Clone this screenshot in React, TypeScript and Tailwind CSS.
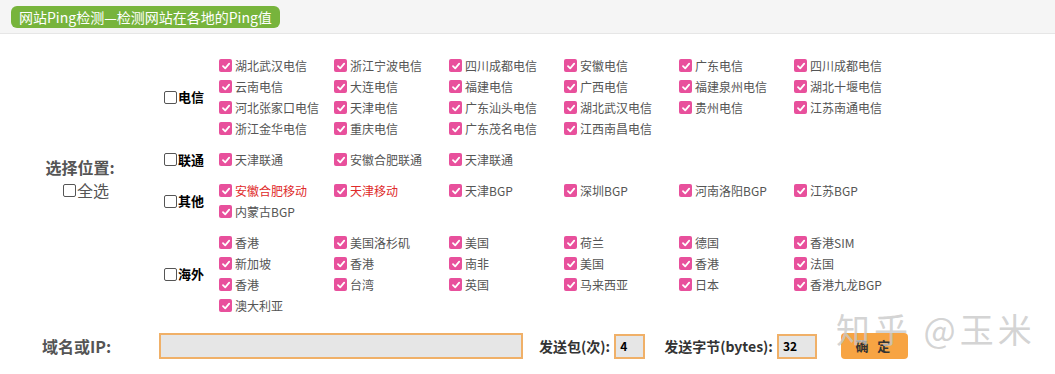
import React from "react";

type Item = { name: string; red?: boolean };

const groups: { label: string; items: Item[] }[] = [
  {
    label: "电信",
    items: [
      "湖北武汉电信", "浙江宁波电信", "四川成都电信", "安徽电信", "广东电信", "四川成都电信",
      "云南电信", "大连电信", "福建电信", "广西电信", "福建泉州电信", "湖北十堰电信",
      "河北张家口电信", "天津电信", "广东汕头电信", "湖北武汉电信", "贵州电信", "江苏南通电信",
      "浙江金华电信", "重庆电信", "广东茂名电信", "江西南昌电信",
    ].map((name) => ({ name })),
  },
  {
    label: "联通",
    items: ["天津联通", "安徽合肥联通", "天津联通"].map((name) => ({ name })),
  },
  {
    label: "其他",
    items: [
      { name: "安徽合肥移动", red: true },
      { name: "天津移动", red: true },
      { name: "天津BGP" },
      { name: "深圳BGP" },
      { name: "河南洛阳BGP" },
      { name: "江苏BGP" },
      { name: "内蒙古BGP" },
    ],
  },
  {
    label: "海外",
    items: [
      "香港", "美国洛杉矶", "美国", "荷兰", "德国", "香港SIM",
      "新加坡", "香港", "南非", "美国", "香港", "法国",
      "香港", "台湾", "英国", "马来西亚", "日本", "香港九龙BGP",
      "澳大利亚",
    ].map((name) => ({ name })),
  },
];

const PinkBox = () => (
  <span className="w-[13px] h-[13px] rounded-[2px] bg-[#e8509c] flex items-center justify-center shrink-0">
    <svg width="10" height="10" viewBox="0 0 10 10">
      <path d="M2 5.2 L4.2 7.3 L8.2 2.6" stroke="white" strokeWidth="1.8" fill="none" strokeLinecap="round" strokeLinejoin="round" />
    </svg>
  </span>
);

const EmptyBox = () => (
  <span className="w-[13px] h-[13px] rounded-[2px] border border-[#555] bg-white shrink-0" />
);

export default function App() {
  return (
    <div
      className="relative w-[1055px] h-[374px] bg-white text-[#555] overflow-hidden"
      style={{ fontFamily: '"Noto Sans CJK SC", "Noto Sans", sans-serif' }}
    >
      <div className="h-[34px] bg-[#f5f5f5] border-b border-[#e6e6e6] flex items-center pl-[11px]">
        <div className="h-[22px] px-[8px] rounded-[6px] bg-[#77b43c] text-white text-[14px] leading-[22px]">
          网站Ping检测—检测网站在各地的Ping值
        </div>
      </div>

      <div className="flex mt-[16px]">
        <div className="w-[160px] flex flex-col items-center justify-center pb-[14px]">
          <div className="text-[16px] font-bold leading-[22px]">选择位置:</div>
          <div className="flex items-center gap-[1px] text-[16px] leading-[22px] ml-[12px] mt-[1px]">
            <EmptyBox />
            <span>全选</span>
          </div>
        </div>
        <div className="flex flex-col">
          {groups.map((g) => (
            <div key={g.label} className="flex py-[5px]">
              <div className="w-[59px] flex items-center gap-[1px] pl-[4px] text-[13px] font-bold text-black">
                <EmptyBox />
                <span>{g.label}</span>
              </div>
              <div className="grid grid-cols-[repeat(6,115px)]">
                {g.items.map((it, i) => (
                  <div key={i} className="h-[21px] flex items-center gap-[3px] text-[12px]">
                    <PinkBox />
                    <span className={it.red ? "text-[#e02a2a]" : "text-[#555]"}>{it.name}</span>
                  </div>
                ))}
              </div>
            </div>
          ))}
        </div>
      </div>

      <div className="flex items-center mt-[12px] h-[26px]">
        <div className="w-[159px] pl-[42px] text-[16px] font-bold">域名或IP:</div>
        <div className="w-[364px] h-[26px] border-2 border-[#f0b068] bg-[#e6e6e6]" />
        <span className="ml-[16px] text-[14px] font-bold text-[#333]">发送包(次):</span>
        <div className="ml-[4px] w-[31px] h-[25px] border-2 border-[#f0b068] bg-[#e6e6e6] text-[12px] font-bold text-black flex items-center pl-[4px]">4</div>
        <span className="ml-[19px] text-[14px] font-bold text-[#333]">发送字节(bytes):</span>
        <div className="ml-[4px] w-[40px] h-[25px] border-2 border-[#f0b068] bg-[#e6e6e6] text-[12px] font-bold text-black flex items-center pl-[4px]">32</div>
        <button className="ml-[24px] w-[67px] h-[26px] rounded-[4px] bg-[#f7a443] text-[13px] font-bold text-[#333] tracking-[3px]">
          确 定
        </button>
      </div>

      <div className="absolute left-[836px] top-[303px] text-[34px] text-[#c8c8c8]/80 tracking-[4px] pointer-events-none">
        知乎 @玉米
      </div>
    </div>
  );
}
